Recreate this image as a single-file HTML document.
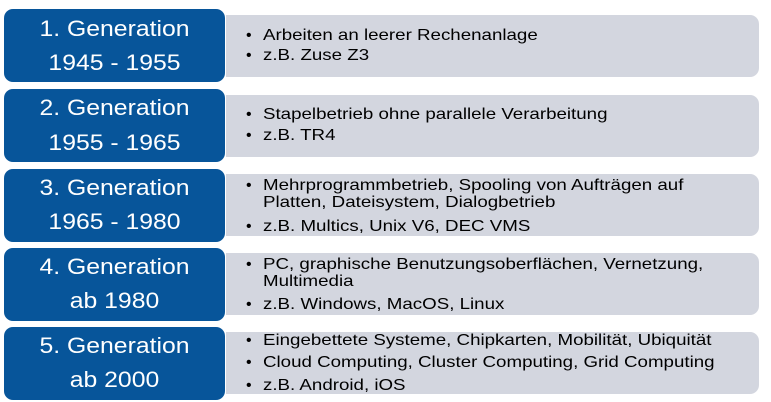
<!DOCTYPE html>
<html><head><meta charset="utf-8"><style>
body{margin:0;width:771px;height:402px;background:#fff;position:relative;overflow:hidden;font-family:"Liberation Sans",Arial,sans-serif}
.b{position:absolute;left:4px;width:221px;height:73px;background:#07559a;border-radius:9px;color:#fff;font-size:22.5px;text-align:center}
.b div{position:absolute;left:0;right:0;line-height:26px;transform:scaleX(1.1)}
.g{position:absolute;left:226px;width:533px;height:62px;background:#d3d6df;border-radius:0 9px 9px 0}
.t{position:absolute;left:246px;font-size:16px;color:#000;line-height:18px;white-space:nowrap}
.t span{position:absolute;left:0}
.t i{font-style:normal;position:absolute;left:17px;transform:scaleX(1.17);transform-origin:0 0}
</style></head><body>
<div class="b" style="top:9px"><div style="top:7px">1. Generation</div><div style="top:41px">1945 - 1955</div></div>
<div class="g" style="top:15px"></div>
<div class="t" style="top:27px"><span>•</span><i>Arbeiten an leerer Rechenanlage</i></div>
<div class="t" style="top:47px"><span>•</span><i>z.B. Zuse Z3</i></div>

<div class="b" style="top:89px"><div style="top:6px">2. Generation</div><div style="top:41px">1955 - 1965</div></div>
<div class="g" style="top:95px"></div>
<div class="t" style="top:106px"><span>•</span><i>Stapelbetrieb ohne parallele Verarbeitung</i></div>
<div class="t" style="top:127px"><span>•</span><i>z.B. TR4</i></div>

<div class="b" style="top:169px"><div style="top:6px">3. Generation</div><div style="top:40px">1965 - 1980</div></div>
<div class="g" style="top:174px"></div>
<div class="t" style="top:177px"><span>•</span><i>Mehrprogrammbetrieb, Spooling von Aufträgen auf</i></div>
<div class="t" style="top:194px"><i>Platten, Dateisystem, Dialogbetrieb</i></div>
<div class="t" style="top:218px"><span>•</span><i>z.B. Multics, Unix V6, DEC VMS</i></div>

<div class="b" style="top:248px"><div style="top:6px">4. Generation</div><div style="top:40px">ab 1980</div></div>
<div class="g" style="top:253px"></div>
<div class="t" style="top:256px"><span>•</span><i>PC, graphische Benutzungsoberflächen, Vernetzung,</i></div>
<div class="t" style="top:273px"><i>Multimedia</i></div>
<div class="t" style="top:296px"><span>•</span><i>z.B. Windows, MacOS, Linux</i></div>

<div class="b" style="top:327px"><div style="top:6px">5. Generation</div><div style="top:40px">ab 2000</div></div>
<div class="g" style="top:332px"></div>
<div class="t" style="top:332px"><span>•</span><i>Eingebettete Systeme, Chipkarten, Mobilität, Ubiquität</i></div>
<div class="t" style="top:354px"><span>•</span><i>Cloud Computing, Cluster Computing, Grid Computing</i></div>
<div class="t" style="top:377px"><span>•</span><i>z.B. Android, iOS</i></div>
</body></html>
